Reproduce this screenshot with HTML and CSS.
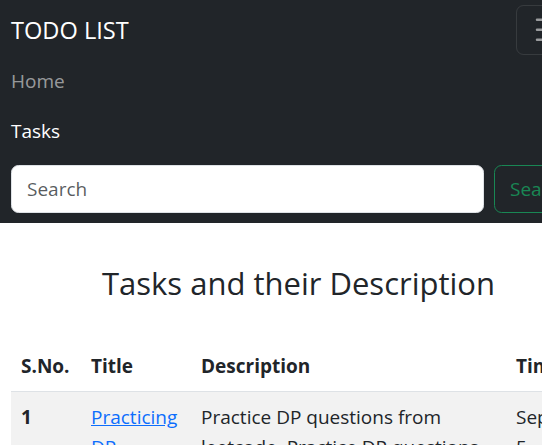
FILE: index.html
```html
<!DOCTYPE html>
<html lang="en">
<head>
<meta charset="utf-8">
<title>TODO LIST</title>
<link rel="stylesheet" href="styles.css">
</head>
<body>
<div class="page">
  <nav class="navbar">
    <div class="brand-row">
      <a class="brand" href="#">TODO LIST</a>
      <button class="toggler" type="button" aria-label="Toggle navigation">
        <svg class="toggler-icon" viewBox="0 0 30 30" width="37.5" height="37.5"><path d="M4 7h22M4 15h22M4 23h22" stroke="rgba(255,255,255,0.55)" stroke-width="2" stroke-linecap="round" stroke-miterlimit="10" fill="none"/></svg>
      </button>
    </div>
    <div class="menu">
      <ul class="nav-list">
        <li><a class="nav-link" href="#">Home</a></li>
        <li><a class="nav-link active" href="#">Tasks</a></li>
      </ul>
      <form class="search" onsubmit="return false">
        <input class="search-input" type="search" placeholder="Search" aria-label="Search">
        <button class="search-btn" type="submit">Search</button>
      </form>
    </div>
  </nav>

  <main class="content">
    <h1 class="title">Tasks and their Description</h1>
    <table class="tasks">
      <colgroup>
        <col class="c-no"><col class="c-title"><col class="c-desc"><col class="c-time">
      </colgroup>
      <thead>
        <tr><th>S.No.</th><th>Title</th><th>Description</th><th>Time</th></tr>
      </thead>
      <tbody>
        <tr class="striped">
          <th>1</th>
          <td><a class="task-link" href="#">Practicing DP</a></td>
          <td>Practice DP questions from leetcode. Practice DP questions from GFG.</td>
          <td>Sept. 5, 2023, 10:31 a.m.</td>
        </tr>
        <tr>
          <th>2</th>
          <td><a class="task-link" href="#">Reading</a></td>
          <td>Read two chapters of the book.</td>
          <td>Sept. 5, 2023, 11:02 a.m.</td>
        </tr>
      </tbody>
    </table>
  </main>
</div>
</body>
</html>
```

FILE: styles.css
```css
html, body {
  margin: 0;
  padding: 0;
  overflow: hidden;
  background: #fff;
}

body {
  font-family: "Open Sans", "Noto Sans", sans-serif;
  color: #212529;
  font-size: 19px;
  line-height: 30px;
}

.page {
  width: 597px;
}

.navbar {
  background: #212529;
  padding: 5px 11px 10px;
}

.brand-row {
  display: flex;
  justify-content: space-between;
  align-items: center;
  height: 50px;
}

.brand {
  color: #fff;
  text-decoration: none;
  font-size: 23.6px;
  line-height: 37.5px;
  padding-top: 2px;
}

.toggler {
  box-sizing: border-box;
  width: 70px;
  height: 50px;
  padding: 0;
  display: flex;
  align-items: center;
  justify-content: center;
  background: transparent;
  border: 1px solid rgba(255, 255, 255, 0.1);
  border-radius: 7.5px;
}

.toggler-icon {
  display: block;
}

.menu {
  display: flex;
  flex-direction: column;
}

.nav-list {
  list-style: none;
  margin: 0 0 10px;
  padding: 0;
}

.nav-link {
  display: block;
  padding: 11px 0 9px;
  line-height: 30px;
  color: rgba(255, 255, 255, 0.55);
  text-decoration: none;
}

.nav-link.active {
  color: #fff;
}

.search {
  display: flex;
  gap: 10px;
  margin: 0;
}

.search-input {
  flex: 1;
  min-width: 0;
  box-sizing: border-box;
  height: 47.5px;
  padding: 0 15px;
  font: inherit;
  color: #212529;
  background: #fff;
  border: 1px solid #dee2e6;
  border-radius: 7.5px;
  outline: none;
}

.search-input::placeholder {
  color: rgba(33, 37, 41, 0.75);
}

.search-btn {
  box-sizing: border-box;
  width: 92px;
  height: 47.5px;
  padding: 0 15px;
  font: inherit;
  text-align: left;
  white-space: nowrap;
  overflow: hidden;
  color: #198754;
  background: transparent;
  border: 1px solid #198754;
  border-radius: 7.5px;
}

.content {
  padding: 0 11px;
}

.title {
  margin: 42px 0 39px;
  text-align: center;
  font-size: 31px;
  font-weight: 500;
  line-height: 1.2;
}

.tasks {
  width: 575px;
  table-layout: fixed;
  border-collapse: collapse;
}

.c-no { width: 70px; }
.c-title { width: 110px; }
.c-desc { width: 315px; }
.c-time { width: 80px; }

.tasks th,
.tasks td {
  padding: 10px;
  text-align: left;
  vertical-align: top;
  border-bottom: 1px solid #dee2e6;
}

.tasks th {
  font-weight: 700;
}

.tasks thead th {
  vertical-align: bottom;
}

.striped th,
.striped td {
  background: #f2f2f2;
}

.task-link {
  color: #0d6efd;
  text-decoration: underline;
}
```
